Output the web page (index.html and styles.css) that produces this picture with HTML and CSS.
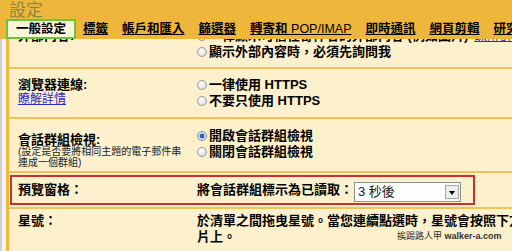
FILE: index.html
```html
<!DOCTYPE html>
<html lang="zh-TW">
<head>
    <meta charset="UTF-8">
    <title>設定</title>
    <link rel="stylesheet" href="styles.css">
</head>
<body>
    <div class="header">
        <h1 class="title">設定</h1>
        <div class="tabs">
            <span class="tab tab-active">一般設定</span>
            <a class="tab" href="#">標籤</a>
            <a class="tab" href="#">帳戶和匯入</a>
            <a class="tab" href="#">篩選器</a>
            <a class="tab" href="#">轉寄和 <span class="latin">POP/IMAP</span></a>
            <a class="tab" href="#">即時通訊</a>
            <a class="tab" href="#">網頁剪輯</a>
            <a class="tab" href="#">研究室</a>
        </div>
    </div>

    <div class="main">
        <div class="row row-cut">
            <div class="label">外部內容:</div>
            <div class="value">
                <label class="opt"><input type="radio" class="radio" name="ext">一律顯示可信任寄件者的外部內容 (例如圖片) <a class="inline-link" href="#">瞭解詳情</a></label>
                <label class="opt"><input type="radio" class="radio" name="ext">顯示外部內容時，必須先詢問我</label>
            </div>
        </div>

        <div class="row">
            <div class="label">
                瀏覽器連線:
                <a class="more" href="#">瞭解詳情</a>
            </div>
            <div class="value">
                <label class="opt"><input type="radio" class="radio" name="https">一律使用 HTTPS</label>
                <label class="opt"><input type="radio" class="radio" name="https">不要只使用 HTTPS</label>
            </div>
        </div>

        <div class="row row-thread">
            <div class="label">
                會話群組檢視:
                <span class="note">(設定是否要將相同主題的電子郵件串<br>連成一個群組)</span>
            </div>
            <div class="value">
                <label class="opt"><input type="radio" class="radio" name="conv" checked>開啟會話群組檢視</label>
                <label class="opt"><input type="radio" class="radio" name="conv">關閉會話群組檢視</label>
            </div>
        </div>

        <div class="row row-preview">
            <div class="highlight">
                <div class="label">預覽窗格：</div>
                <div class="value">將會話群組標示為已讀取：</div>
                <span class="select">
                    <select>
                        <option>3 秒後</option>
                    </select>
                </span>
            </div>
        </div>

        <div class="row row-star">
            <div class="label">星號：</div>
            <div class="value">
                於清單之間拖曳星號。當您連續點選時，星號會按照下方顯示的順序循環變換。<br>
                片上。
            </div>
        </div>
    </div>

    <div class="watermark">挨踢路人甲 <b>walker-a.com</b></div>
</body>
</html>
```

FILE: styles.css
```css
body {
    margin: 0;
    height: 251px;
    overflow: hidden;
    position: relative;
    font-family: "Liberation Sans", "Noto Sans CJK TC", sans-serif;
    font-size: 13px;
    color: #000;
    background: linear-gradient(to right, #cfcfcf 0, #cfcfcf 2px, #f3f3f3 2px);
}

.header {
    height: 39px;
    background-color: #efb63c;
}

.title {
    box-sizing: border-box;
    margin: 0;
    padding: 3px 0 0 9px;
    height: 19px;
    font-size: 17px;
    line-height: 16px;
    font-weight: normal;
    color: #8d8842;
}

.tabs {
    display: flex;
    height: 20px;
    padding-left: 6px;
    white-space: nowrap;
}

.tab {
    padding: 0 7px;
    font-size: 12.5px;
    line-height: 20px;
    color: #000;
    font-weight: bold;
    text-decoration: underline;
}

.tab .latin {
    font-weight: normal;
}

.tab-active {
    padding: 0 8px;
    border: 2px solid #6cc43c;
    background-color: #fdf5da;
    line-height: 16px;
    text-decoration: none;
}

.main {
    margin-left: 6px;
    height: 212px;
    border-left: 3px solid #efb63c;
    background-color: #fdf0cc;
    overflow: hidden;
}

.row {
    display: flex;
    padding: 8px 0 8px 9px;
    border-bottom: 2px solid #f1c25a;
    white-space: nowrap;
}

.row-cut {
    margin-top: -19px;
    padding-bottom: 7px;
}

.label {
    flex: none;
    width: 179px;
    font-weight: bold;
    line-height: 16px;
}

.value {
    font-weight: bold;
    line-height: 16px;
}

.opt {
    display: flex;
    align-items: center;
    height: 16px;
}

.radio {
    appearance: none;
    box-sizing: border-box;
    width: 10px;
    height: 10px;
    margin: 0 2px 0 0;
    border: 1px solid #9b9b9b;
    border-radius: 50%;
    background: radial-gradient(circle at 40% 35%, #fff, #d2d2d2);
}

.radio:checked {
    border-color: #7d8ba3;
    background: radial-gradient(circle, #2b5fc4 0, #2b5fc4 2px, #e9eef8 3px, #c6d0e2);
}

.more {
    display: block;
    font-size: 12px;
    line-height: 12px;
    font-weight: normal;
    color: #2b2bd4;
}

.inline-link {
    margin-left: 6px;
    font-weight: normal;
    color: #2b2bd4;
}

.row-thread {
    padding: 9px 0 3px 9px;
}

.row-thread .label {
    padding-top: 5px;
    line-height: 13px;
}

.note {
    display: block;
    font-size: 10px;
    line-height: 11px;
    font-weight: normal;
    color: #222;
}

.row-preview {
    padding: 2px 0 2px 1px;
}

.highlight {
    display: flex;
    align-items: center;
    box-sizing: border-box;
    width: 465px;
    height: 30px;
    padding-left: 6px;
    border: 2px solid #c9302c;
}

.select {
    position: relative;
    display: inline-block;
    margin: 3px 0 0 1px;
}

.select select {
    appearance: none;
    display: block;
    width: 107px;
    height: 20px;
    padding: 0 0 0 3px;
    border: 1px solid #8e8e8e;
    border-radius: 0;
    background-color: #fff;
    font-family: inherit;
    font-size: 13px;
    color: #222;
}

.select::before {
    content: "";
    position: absolute;
    right: 2px;
    top: 3px;
    width: 12px;
    height: 12px;
    border: 1px solid #a5a5a5;
    background-color: #ececec;
}

.select::after {
    content: "";
    position: absolute;
    right: 6px;
    top: 9px;
    border-left: 3.5px solid transparent;
    border-right: 3.5px solid transparent;
    border-top: 4px solid #000;
}

.row-star {
    padding-top: 4px;
    border-bottom: none;
}

.watermark {
    position: absolute;
    left: 397px;
    top: 229px;
    font-size: 9px;
    color: #333;
}
```
